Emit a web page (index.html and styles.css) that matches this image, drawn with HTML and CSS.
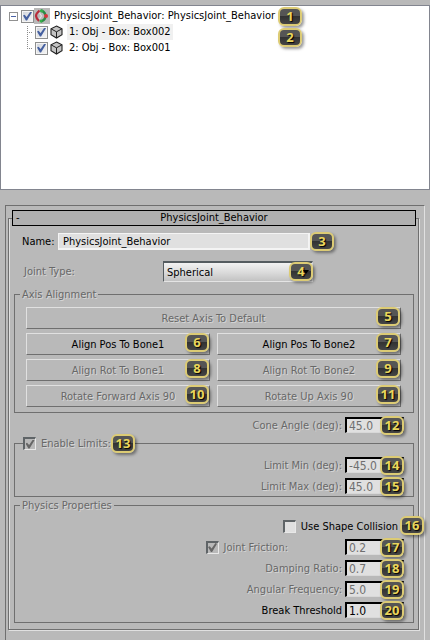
FILE: index.html
```html
<!DOCTYPE html>
<html lang="en">
<head>
<meta charset="utf-8">
<title>PhysicsJoint_Behavior</title>
<link rel="stylesheet" href="styles.css">
</head>
<body>
<svg class="defs" width="0" height="0" aria-hidden="true">
  <symbol id="cube" viewBox="0 0 13 14">
    <path d="M6.500 1 12 3.800V9.800L6.500 13 1 9.800V3.800Z" fill="#c4c4c4" stroke="#222" stroke-width="1.100"/>
    <path d="M1 3.800 6.500 6.800 12 3.800M6.500 6.800V13" fill="none" stroke="#222" stroke-width="1"/>
  </symbol>
</svg>

<main class="tree">
  <ul class="tree-root">
    <li>
      <div class="node">
        <button class="expander" type="button" aria-label="Collapse"></button>
        <input class="tick" type="checkbox" id="n0" checked>
        <svg class="joint" width="16" height="16" viewBox="0 0 16 16" aria-hidden="true">
          <path d="M5.500 2.500Q2 5.500 2 8 2.500 11 5 13" fill="none" stroke="#b92a3a" stroke-width="2.200"/>
          <path d="M7 2.500Q10.500 3.500 11.500 7M11.500 9Q10.500 12.500 7 13.500" fill="none" stroke="#2d8a45" stroke-width="2.400"/>
          <path d="M5.500 5 7.500 8 5.500 11" fill="none" stroke="#e2e2e2" stroke-width="1.200"/>
          <circle cx="7.500" cy="2.800" r="1.600" fill="#35b04a"/>
          <circle cx="7" cy="13" r="1.500" fill="#35b04a"/>
          <circle cx="12" cy="8" r="2" fill="#d8323a"/>
        </svg>
        <label class="node-name" for="n0">PhysicsJoint_Behavior: PhysicsJoint_Behavior</label>
        <span class="badge inline">1</span>
      </div>
      <ul class="tree-children">
        <li class="node child">
          <input class="tick" type="checkbox" id="n1" checked>
          <svg class="cube" width="13" height="14" aria-hidden="true"><use href="#cube"/></svg>
          <label class="node-name selected" for="n1">1: Obj - Box: Box002</label>
          <span class="badge far">2</span>
        </li>
        <li class="node child">
          <input class="tick" type="checkbox" id="n2" checked>
          <svg class="cube" width="13" height="14" aria-hidden="true"><use href="#cube"/></svg>
          <label class="node-name" for="n2">2: Obj - Box: Box001</label>
        </li>
      </ul>
    </li>
  </ul>
</main>

<section class="panel">
  <div class="rollout">
    <button class="rollout-head" type="button"><span class="sign">-</span>PhysicsJoint_Behavior</button>

    <div class="name-row">
      <label for="name">Name:</label>
      <input id="name" class="name-input" type="text" value="PhysicsJoint_Behavior">
      <span class="badge inline">3</span>
    </div>

    <div class="type-row">
      <label class="off" for="type">Joint Type:</label>
      <span class="select-wrap">
        <select id="type"><option>Spherical</option></select>
        <span class="badge over">4</span>
        <i class="arrow"></i>
      </span>
    </div>

    <fieldset class="group">
      <legend class="off">Axis Alignment</legend>
      <div class="buttons">
        <button class="push wide" type="button" disabled>Reset Axis To Default<span class="badge over">5</span></button>
        <button class="push" type="button">Align Pos To Bone1<span class="badge over">6</span></button>
        <button class="push" type="button">Align Pos To Bone2<span class="badge over">7</span></button>
        <button class="push" type="button" disabled>Align Rot To Bone1<span class="badge over">8</span></button>
        <button class="push" type="button" disabled>Align Rot To Bone2<span class="badge over">9</span></button>
        <button class="push" type="button" disabled>Rotate Forward Axis 90<span class="badge over">10</span></button>
        <button class="push" type="button" disabled>Rotate Up Axis 90<span class="badge over">11</span></button>
      </div>
    </fieldset>

    <div class="row cone">
      <label class="off" for="cone">Cone Angle (deg):</label>
      <span class="spin"><input id="cone" type="text" value="45.0" disabled><span class="badge over">12</span></span>
    </div>

    <fieldset class="group limits">
      <legend class="off check-legend">
        <input class="box" type="checkbox" id="limits" checked disabled>
        <label for="limits">Enable Limits:</label>
        <span class="badge over">13</span>
      </legend>
      <div class="rows">
        <div class="row">
          <label class="off" for="min">Limit Min (deg):</label>
          <span class="spin"><input id="min" type="text" value="-45.0" disabled><span class="badge over">14</span></span>
        </div>
        <div class="row">
          <label class="off" for="max">Limit Max (deg):</label>
          <span class="spin"><input id="max" type="text" value="45.0" disabled><span class="badge over">15</span></span>
        </div>
      </div>
    </fieldset>

    <fieldset class="group physics">
      <legend class="off">Physics Properties</legend>
      <div class="rows">
        <div class="row shape">
          <input class="box" type="checkbox" id="shape">
          <label for="shape">Use Shape Collision</label>
          <span class="badge over">16</span>
        </div>
        <div class="row">
          <span class="friction">
            <input class="box" type="checkbox" id="useFriction" checked disabled>
            <label class="off" for="useFriction">Joint Friction:</label>
          </span>
          <span class="spin"><input type="text" value="0.2" aria-label="Joint Friction" disabled><span class="badge over">17</span></span>
        </div>
        <div class="row">
          <label class="off" for="damping">Damping Ratio:</label>
          <span class="spin"><input id="damping" type="text" value="0.7" disabled><span class="badge over">18</span></span>
        </div>
        <div class="row">
          <label class="off" for="freq">Angular Frequency:</label>
          <span class="spin"><input id="freq" type="text" value="5.0" disabled><span class="badge over">19</span></span>
        </div>
        <div class="row">
          <label for="break">Break Threshold</label>
          <span class="spin"><input id="break" type="text" value="1.0"><span class="badge over">20</span></span>
        </div>
      </div>
    </fieldset>
  </div>
</section>
</body>
</html>
```
FILE: styles.css
```css
* {
  box-sizing: border-box;
}

body {
  margin: 0;
  padding-top: 5px;
  min-height: 100vh;
  display: flex;
  flex-direction: column;
  background: #b9b9b9;
  color: #000;
  font: 11px/15px "DejaVu Sans Condensed", "DejaVu Sans", sans-serif;
}

input,
select,
button {
  font: inherit;
  color: inherit;
  margin: 0;
  border-radius: 0;
}

ul {
  list-style: none;
  margin: 0;
  padding: 0;
}

.defs {
  position: absolute;
}

.off {
  color: #686868;
  text-shadow: 1px 1px #d6d6d6;
}

/* Numbered callouts */
.badge {
  flex: none;
  width: 24px;
  height: 19px;
  border: 2px solid #dccb74;
  border-radius: 6px;
  background: linear-gradient(#555 0 45%, #333 50%, #454545);
  box-shadow: 2px 2px 3px #0006;
  color: #ead65c;
  font: bold 13px/15px "Open Sans", sans-serif;
  text-align: center;
  text-shadow: 1px 1px 1px #000;
}

.badge.over {
  position: absolute;
  top: 50%;
  right: 0;
  margin-top: -10px;
}

/* Tree list */
.tree {
  height: 185px;
  padding: 2px 8px;
  background: #fff;
  border: 1px solid #82858f;
}

.node {
  display: flex;
  align-items: center;
  height: 16px;
}

.expander {
  width: 9px;
  height: 9px;
  margin-right: 3px;
  padding: 0;
  border: 1px solid #919191;
  background: linear-gradient(#4b63a7, #4b63a7) center / 5px 1px no-repeat #fff;
}

.tick,
.box {
  appearance: none;
  flex: none;
  width: 13px;
  height: 13px;
}

.tick {
  border: 1px solid #8e8f8f;
  background: linear-gradient(135deg, #cfd3da, #f6f6f6);
  box-shadow: inset 0 0 0 1px #f4f4f4;
}

.tick:checked,
.box:checked {
  display: grid;
  place-items: center;
}

.tick:checked::before,
.box:checked::before {
  content: "";
  width: 9px;
  height: 9px;
  background: #4560a0;
  clip-path: polygon(0 45%, 18% 35%, 40% 62%, 82% 0, 100% 8%, 45% 100%, 32% 100%);
}

.joint {
  background: #b9b9b9;
}

.node-name {
  padding: 0 2px;
  margin-left: 2px;
  line-height: 16px;
}

.node .badge.inline {
  margin-left: 1px;
}

.tree-children {
  margin-left: 18px;
  background: repeating-linear-gradient(#8c8c8c 0 1px, transparent 1px 2px) 0 2px / 1px 22px no-repeat;
}

.child {
  position: relative;
  padding-left: 8px;
  background: repeating-linear-gradient(90deg, #8c8c8c 0 1px, transparent 1px 2px) 0 8px / 6px 1px no-repeat;
}

.cube {
  margin: 0 2px;
}

.selected {
  background: #f0f0f0;
}

.child .badge.far {
  position: absolute;
  left: 251px;
  top: 4px;
}

/* Rollout panel */
.panel {
  flex: 1;
  margin: 15px 5px 0;
  padding: 12px 5px 9px 2px;
  border: solid #6f6f6f;
  border-width: 1px 1px 0;
  border-right-color: #e0e0e0;
}

.rollout {
  padding: 0 4px 6px 5px;
  border: 1px solid #6f6f6f;
  box-shadow: 1px 1px #e0e0e0, inset 1px 0 #e0e0e0;
}

.rollout-head {
  display: block;
  position: relative;
  width: calc(100% + 4px);
  height: 16px;
  margin: -9px -2px 0;
  padding: 0;
  border: 1px solid #000;
  background: #b0b0b0;
  line-height: 14px;
  text-align: center;
}

.sign {
  position: absolute;
  left: 3px;
}

.name-row {
  display: flex;
  align-items: center;
  height: 17px;
  margin: 7px 80px 0 8px;
}

.name-row label {
  width: 36px;
}

.name-input {
  flex: 1;
  min-width: 0;
  height: 17px;
  padding: 0 4px;
  border: 2px solid #f4f4f4;
  border-width: 1px 2px 2px 1px;
  background: #e0e0e0;
}

.type-row {
  display: flex;
  align-items: center;
  margin: 11px 101px 0 10px;
}

.type-row label {
  width: 139px;
}

.select-wrap {
  position: relative;
  flex: 1;
  display: flex;
}

select {
  appearance: none;
  width: 100%;
  height: 21px;
  padding: 0 3px;
  border: 1px solid #555c60;
  border-width: 2px 1px 1px;
  border-right-color: #e4e4e4;
  border-bottom-color: #e4e4e4;
  background: linear-gradient(#f2f2f2, #dcdcdc 50%, #c2c2c2);
}

.arrow {
  position: absolute;
  right: 4px;
  top: 9px;
  border: solid transparent;
  border-width: 4px 3px 0;
  border-top-color: #000;
}

/* Group boxes */
.group {
  min-width: 0;
  margin: 5px 0 0;
  padding: 0 5px;
  border: 1px solid #6f6f6f;
}

legend {
  height: 15px;
  padding: 0 2px;
}

.buttons {
  display: grid;
  grid-template-columns: 1fr 1fr;
  gap: 4px 7px;
  padding: 5px 7px 5px 6px;
}

.push {
  position: relative;
  height: 22px;
  padding: 0;
  border: 1px solid #e0e0e0;
  border-right-color: #6f6f6f;
  border-bottom-color: #6f6f6f;
  background: #b9b9b9;
  text-align: center;
}

.push:disabled {
  color: #686868;
  text-shadow: 1px 1px #d6d6d6;
}

.push.wide {
  grid-column: 1 / -1;
}

.push .badge {
  top: 9px;
}

.row {
  display: flex;
  align-items: center;
  justify-content: flex-end;
  gap: 3px;
  height: 16px;
}

.rows {
  display: grid;
  gap: 5px;
  padding: 6px 4px 2px 0;
}

.cone {
  margin: 4px 10px 0 0;
}

.spin {
  position: relative;
  display: flex;
  width: 59px;
}

.spin input {
  width: 100%;
  height: 16px;
  padding: 0 2px;
  border: 1px solid #000;
  border-width: 2px 1px 1px 2px;
  border-right-color: #777;
  border-bottom-color: #d8d8d8;
  background: #e0e0e0;
  font-size: 12px;
  line-height: 13px;
}

.spin input:disabled {
  color: #6f6f6f;
}

.spin .badge {
  margin-top: -9px;
}

.limits {
  margin-top: 3px;
}

.check-legend {
  position: relative;
  display: flex;
  align-items: center;
  gap: 5px;
  margin-left: 3px;
  padding: 0 24px 0 0;
}

.box {
  border: 2px solid #5f6467;
  border-right: 1px solid #e8e8e8;
  border-bottom: 1px solid #e8e8e8;
  background: #e0e0e0;
}

.box:disabled {
  background: #b9b9b9;
}

.box:checked::before {
  background: #666;
}

.physics {
  margin-top: 1px;
}

.physics .rows {
  padding: 5px 4px 4px 0;
}

.shape {
  position: relative;
  gap: 5px;
  padding-right: 6px;
}

.shape .badge {
  right: -20px;
}

.friction {
  display: flex;
  align-items: center;
  gap: 5px;
  margin-right: 54px;
}
```
